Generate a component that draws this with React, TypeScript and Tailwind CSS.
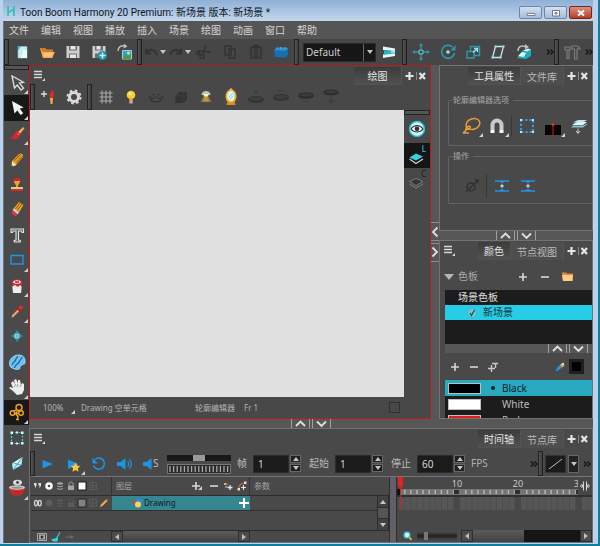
import type { ReactNode } from 'react'
import clsx from 'clsx'

const INK = '#d6d6d6'
const DIM = '#333333'
const TEAL = '#2b9aab'
const CYAN = '#35cfe6'
const BLUE = '#1f93e6'

// all drawings share a 20x20 box
const ICONS: Record<string, ReactNode> = {
  newScene: (
    <>
      <path d="M6 4.500h9v11.500H6z" fill="#c9eef2" stroke="#7fc7d2" strokeWidth=".6" />
      <path d="M6 4.500h3L6 8.500z" fill="#35b6cc" />
      <path d="M11 8h4v8H9z" fill="#e9fbfc" />
    </>
  ),
  openScene: (
    <>
      <path d="M3 6h5l2 1.500h6V16H6z" fill="#d07c2a" />
      <path d="M3 6l3 4h12l-3 6H6z" fill="#f4ab55" />
      <path d="M7 11h9l-2 3.500H7z" fill="#ffc67d" />
    </>
  ),
  save: (
    <>
      <path d="M3.500 4h13v12h-13z" fill="#cfcfcf" />
      <path d="M6 4h8v4.500H6zM6 11.500h8V16H6z" fill="#6c6c6c" />
      <path d="M7.500 4h5v3.500h-5zM7 12.500h6V16H7z" fill="#e6e6e6" />
    </>
  ),
  saveAs: (
    <>
      <path d="M3.500 4h13v12h-13z" fill="#cfcfcf" />
      <path d="M6 4h8v4.500H6zM6 11.500h6V16H6z" fill="#6c6c6c" />
      <path d="M7.500 4h4v3.500h-4z" fill="#e6e6e6" />
      <circle cx="13.500" cy="13.500" r="4.500" fill="#1497b5" />
      <path d="M13.500 10.500v6M10.500 13.500h6" stroke="#d8f6ff" strokeWidth="1.500" />
    </>
  ),
  importImage: (
    <>
      <path d="M3 9c0-4 3-6 7-5" stroke="#bdbdbd" strokeWidth="1.500" />
      <path d="M9 1.500l3.500 3-4 2z" fill="#bdbdbd" />
      <path d="M7.500 8.500h9v8.500h-9z" fill="#2aa2dc" stroke="#bfe6f4" strokeWidth=".8" />
      <path d="M8 17v-2l3-3 2 2 3-1v4z" fill="#4d9a3b" />
      <circle cx="13.500" cy="11" r="1.500" fill="#ffd94a" />
    </>
  ),
  undo: <path d="M5 11c2-4 9-5 11 2M5 6.500V11.500h5" stroke={DIM} strokeWidth="2" />,
  redo: <path d="M15 11c-2-4-9-5-11 2M15 6.500v5h-5" stroke={DIM} strokeWidth="2" />,
  cut: (
    <g stroke={DIM} strokeWidth="1.500">
      <path d="M12 3L9 12M4 9l13 1" />
      <circle cx="8" cy="14.500" r="2" />
      <circle cx="4" cy="11" r="1.600" />
    </g>
  ),
  copy: (
    <g stroke={DIM} strokeWidth="1.400">
      <path d="M5 4h6v9H5zM9 7h6v9H9z" />
    </g>
  ),
  paste: (
    <g stroke={DIM} strokeWidth="1.500">
      <path d="M5 5h10v11H5zM8 3.500h4v2.500H8zM7.500 9h5M7.500 11.500h5M7.500 14h5" />
    </g>
  ),
  brick: (
    <>
      <path d="M3 8l4-2.500 10 .5v7l-3 2.500L4 15z" fill="#1670b0" />
      <path d="M3 8l4-2.500 10 .5-3 3z" fill="#2d8ecb" />
      <path d="M6 5.500v2M10 5v2.500M14 5v2.500" stroke="#4aa8de" strokeWidth="1.500" />
    </>
  ),
  workspace: (
    <>
      <path d="M4 4.500l12 2v2.500L4 8zM4 16l12-2v-2.500L4 12.500z" fill="#e2fbff" />
      <path d="M5 8.500l7 .5v3l-7 .5z" fill="#27b4cd" />
      <path d="M12 9h4v2.500h-4z" fill="#8fe0ea" />
    </>
  ),
  translate: (
    <g stroke={TEAL} strokeWidth="1.300">
      <circle cx="10" cy="10" r="2.200" stroke="#63b7c4" />
      <path d="M10 7V3M10 13v4M7 10H3M13 10h4" />
      <path d="M10 1l2 3H8zM10 19l2-3H8zM1 10l3-2v4zM19 10l-3-2v4z" fill={TEAL} stroke="none" />
    </g>
  ),
  rotate: (
    <>
      <path d="M14.500 5a6.500 6.500 0 1 0 2 6" stroke={TEAL} strokeWidth="1.600" />
      <path d="M17.500 3v5.500h-5z" fill={TEAL} />
      <circle cx="10" cy="10" r="1.800" fill="#9de4ee" />
    </>
  ),
  scale: (
    <g stroke={TEAL} strokeWidth="1.400">
      <path d="M7.500 9V4.500h9v9h-5M4 9.500h7V16H4z" />
      <path d="M10 10.500l4-3.500M11 6.500h3.500V10" stroke="#9de4ee" />
    </g>
  ),
  skew: (
    <g stroke="#c5e9ee" strokeWidth="1.300">
      <path d="M7.500 4.500h8l-3 11h-8z" />
      <path d="M6.500 3.500h2v2h-2zM14.500 3.500h2v2h-2zM11.500 14.500h2v2h-2zM3.500 14.500h2v2h-2z" fill="#8fdce6" stroke="none" />
    </g>
  ),
  maintain: (
    <>
      <path d="M4 9c0-5 4-6 8-4" stroke="#bfbfbf" strokeWidth="1.500" />
      <path d="M11 2l4 3-4 2.500z" fill="#bfbfbf" />
      <path d="M9 8.500l5-2 3 1v6.500l-5 3-9-1 3-4z" fill="#1fa9bf" />
      <path d="M9 8.500l5-2 3 1-4 2zM4 14l4-4 4 1-2 4z" fill="#d9fbff" />
    </>
  ),
  hammers: (
    <path d="M3 5h5v3H3zM5 8v8.500h2V8M10 4h6l2 3h-3v10h-2.500V7H10z" stroke="#7c7c7c" strokeWidth="1.200" />
  ),
  select: (
    <path d="M5 3l2.500 12 2.700-3 3.800 5 2.500-1.800-4-5 4-1z" stroke="#e0e0e0" strokeWidth="1.300" />
  ),
  arrowFill: <path d="M5 3l2.500 12.500 2.700-3 3.500 4.500 2.500-1.800-3.500-4.700 4-1z" fill="#f4f4f4" />,
  brush: (
    <>
      <path d="M11 9l5-5 1.500 1.500-4.500 5.500z" fill="#f4a74c" />
      <path d="M10 8l4 3.500c-2 5-7 5.500-11 4 4-1 3-5 7-7.500z" fill="#d9262c" />
      <path d="M10.500 10.500l1.500 1.500" stroke="#ff8a70" />
    </>
  ),
  pencil: (
    <>
      <path d="M5 12l7-7c2-1.500 5 .5 4 3l-7 8-4 1.500z" fill="#e9971f" />
      <path d="M5 12l4.500 4-5 2z" fill="#f5e2bb" />
      <path d="M7.500 11.500l6-6M9.500 13.500L15.500 7" stroke="#8c5208" strokeWidth=".9" />
      <path d="M4.500 16l.3 2 1.700-.6z" fill="#333" />
    </>
  ),
  stamp: (
    <>
      <path d="M7 4h6v3H7z" fill="#d92027" />
      <path d="M6.500 7h7L11 11.500v2H9v-2z" fill="#f0a32b" />
      <path d="M4 13h12v2.300H4z" fill="#f2c188" />
      <path d="M4 15.300h12V17H4z" fill="#cf2b22" />
    </>
  ),
  eraser: (
    <>
      <path d="M7 9l5-6 4.500 3-4.500 7.500z" fill="#f0a427" />
      <path d="M8.500 10l5-6.500M10.500 11.500l4.500-7" stroke="#8a550e" />
      <path d="M7 9l5 4.500-1.500 2L5.500 11z" fill="#cfcfcf" />
      <path d="M5.500 11l5 4.500-2 2-4-3z" fill="#e23245" />
    </>
  ),
  text: (
    <path d="M4 4h12.500v3.500h-1.500L14.500 6h-3v9l1.800.5v1.500H7.200v-1.500L9 15V6H6l-.5 1.500H4z" fill="#5b5b5b" stroke="#e3e3e3" strokeWidth="1.100" />
  ),
  rect: <path d="M4 5.500h12v8.500H4z" stroke={BLUE} strokeWidth="1.400" />,
  paint: (
    <>
      <path d="M5 8h10l-1 9H6z" fill="#ededed" />
      <path d="M4.500 6c2-4 9-4 11 0l-.5 5-2-2-2 2-3-2-3 1.500z" fill="#d3262c" />
      <ellipse cx="10" cy="6" rx="3.800" ry="1.800" fill="#f5f5f5" />
      <path d="M8 6h4" stroke="#b31a22" strokeWidth="1.500" />
    </>
  ),
  dropper: (
    <>
      <path d="M4.500 16.500l.8-2.500 5.500-5.500 1.500 1.500-6 6z" fill="#f2a568" />
      <path d="M10 8l4-4 2.500 2.500-4 4.200z" fill="#dc2c2a" />
      <path d="M10 7l3.500 3.500" stroke="#a81414" strokeWidth="1.300" />
    </>
  ),
  pivot: (
    <>
      <path d="M10 4.500v11M4.500 10h11" stroke={TEAL} strokeWidth="1.600" />
      <circle cx="10" cy="10" r="3" fill="#e6fbff" stroke={TEAL} strokeWidth="1.300" />
      <path d="M10 8v4M8 10h4" stroke={TEAL} />
    </>
  ),
  morph: (
    <>
      <path d="M3.500 15C0 9 6 2.500 12 3c6 0 7 6 5.500 9-3 1-4 1-5 5-3 1-6 0-9-2z" fill="#6fc0f2" stroke="#a9dcfb" strokeWidth=".8" />
      <path d="M5 13c1-4 3-2 4-6l2-3M7.500 16c1-5 4-3 5-7l3-4" stroke="#1b5f9d" strokeWidth="1.200" />
    </>
  ),
  hand: (
    <>
      <path d="M4 6l2-2 2 3-1-4 2-1 2 4 0-3 2 0 1 5 1-2 2 1 0 6-2 4-5 1-4-4-4-3 1-1 3 1z" fill="#ededed" />
      <path d="M7 10l2-3M10 10l1-3M13 10l1-2" stroke="#8a8a8a" strokeWidth=".8" />
    </>
  ),
  contour: (
    <g stroke="#f0a51e" strokeWidth="1.400">
      <circle cx="12" cy="5.500" r="3" />
      <circle cx="5.500" cy="11" r="2.300" />
      <circle cx="14" cy="11" r="2.300" />
      <path d="M9.500 7.500L7 9M11 8.500c-2 2-3 3-1 5 2 1 1 2 0 4.500M8 11.500h3.500M9 17.500h3" />
    </g>
  ),
  marquee: (
    <>
      <path d="M4.500 4.500h11v11h-11z" stroke={CYAN} strokeWidth="1.200" strokeDasharray="2 1.500" />
      <path d="M3.500 3.500h2.500v2.500H3.500zM14 3.500h2.500v2.500H14zM3.500 14h2.500v2.500H3.500zM14 14h2.500v2.500H14zM9 3.500h2v2H9zM9 14.500h2v2H9z" fill="#d8f8fc" />
    </>
  ),
  kite: (
    <>
      <path d="M15.500 4l-1 8L6 17l-1-6.500z" fill="#b8eff5" />
      <path d="M15.500 4L6 17M6 10l8 2" stroke="#2a9fb3" strokeWidth=".9" />
      <path d="M15 4.500L9.500 10l-4 .5z" fill="#e8fcff" />
    </>
  ),
  bowl: (
    <>
      <path d="M2 9.500c.5 4 2.500 6.500 4.500 8h7c2-1.500 4-4 4.500-8z" fill="#d03030" />
      <path d="M4 14h12M5.500 16.300h9" stroke="#a51f1f" strokeWidth=".8" />
      <ellipse cx="10" cy="9.500" rx="8" ry="2.200" fill="#d6d6d6" />
      <ellipse cx="10" cy="9.600" rx="6" ry="1.200" fill="#8f8f8f" />
      <ellipse cx="10.500" cy="4.500" rx="4.500" ry="2.800" fill="#dcdcdc" />
      <circle cx="10.500" cy="4.500" r="1.400" fill="#444" />
    </>
  ),
  addDrawing: (
    <>
      <path d="M6 4v6M3 7h6" stroke="#dcdcdc" strokeWidth="1.400" />
      <path d="M12 11c-1-3 0-6 3-8 1 3 1 6 0 8z" fill="#de2b24" />
      <path d="M12 11h3l-.5 6h-2z" fill="#f3a848" />
    </>
  ),
  gear: (
    <>
      <circle cx="10" cy="10" r="4.500" stroke="#dadada" strokeWidth="3" />
      <circle cx="10" cy="10" r="6.500" stroke="#dadada" strokeWidth="2" strokeDasharray="2.600 2.500" />
    </>
  ),
  grid: <path d="M6 3.500v13M10 3.500v13M14 3.500v13M3.500 6h13M3.500 10h13M3.500 14h13" stroke="#a9a9a9" strokeWidth="1.100" />,
  bulb: (
    <>
      <circle cx="10" cy="8" r="4.300" fill="#fbcf30" />
      <path d="M8 11h4l-.5 3h-3z" fill="#f2a81d" />
      <path d="M8.300 14h3.400v2.500H8.300z" fill="#b7b7b7" />
      <circle cx="9" cy="6.800" r="1.500" fill="#fff2a8" />
    </>
  ),
  onion: (
    <g stroke={DIM} strokeWidth="1.200">
      <path d="M3 9c1 2 3 3 5 2M17 9c-1 2-3 3-5 2M4 12c2 4 10 4 12 0M7 7l1 1M13 7l-1 1M9 10h2" />
    </g>
  ),
  cube: (
    <>
      <path d="M4.500 9l3.500-4h8v7l-3 4H4.500z" fill="#343434" />
      <path d="M4.500 9H13M13 9v7M13 9l3-4" stroke="#3d3d3d" />
    </>
  ),
  lightTable: (
    <>
      <path d="M8 8.500h4l3.500 6.500h-11z" fill="#8e7430" />
      <path d="M8.500 8.500h3l1.500 6H7z" fill="#b8983f" />
      <path d="M5.500 8c0-5.500 9-5.500 9 0z" fill="#c7c3ba" />
      <ellipse cx="10" cy="8.300" rx="2.500" ry="1.200" fill="#fff4be" />
    </>
  ),
  mirror: (
    <>
      <ellipse cx="10" cy="9.500" rx="5.500" ry="7" fill="#f0ab2a" />
      <ellipse cx="10" cy="9" rx="3.800" ry="5.300" fill="#d5f5fa" />
      <path d="M8 10l4-4M8.500 12.500l4-4" stroke="#8ed3e0" />
      <path d="M6 15.500h8l.5 2.500h-9z" fill="#dc8d1c" />
      <path d="M8 3l2-2 2 2z" fill="#f6c04f" />
    </>
  ),
  discPlus: (
    <>
      <path d="M2.500 12v2c2 2.500 13 2.500 15 0v-2z" fill="#343434" />
      <ellipse cx="10" cy="12" rx="7.500" ry="2.300" fill="#3d3d3d" stroke="#333" />
      <path d="M10 2v5M7.500 4.500h5" stroke="#3a3a3a" />
    </>
  ),
  discMinus: (
    <>
      <path d="M2.500 10v2c2 2.500 13 2.500 15 0v-2z" fill="#343434" />
      <ellipse cx="10" cy="10" rx="7.500" ry="2.300" fill="#3d3d3d" stroke="#333" />
      <path d="M6.500 4h7" stroke="#3a3a3a" />
    </>
  ),
  disc: (
    <>
      <path d="M2.500 8v2c2 2.500 13 2.500 15 0V8z" fill="#303030" />
      <ellipse cx="10" cy="8" rx="7.500" ry="2" fill="#3b3b3b" stroke="#2c2c2c" />
      <path d="M7 14.500h6" stroke="#3c3c3c" />
    </>
  ),
  discStem: (
    <>
      <path d="M2.500 5v1.500c2 2.500 13 2.500 15 0V5z" fill="#303030" />
      <ellipse cx="10" cy="5" rx="7.500" ry="2" fill="#3b3b3b" stroke="#2c2c2c" />
      <path d="M10 9v8M7 14h6" stroke="#3a3a3a" />
    </>
  ),
  eye: (
    <>
      <circle cx="10" cy="10" r="7.500" fill="#d7fafd" stroke="#27bfd2" strokeWidth="1.500" />
      <path d="M4 10c3-4.500 9-4.500 12 0-3 4-9 4-12 0z" fill="#f9ffff" stroke="#333" strokeWidth="1.200" />
      <circle cx="10" cy="9.800" r="2.400" fill="#333" />
    </>
  ),
  lineArt: (
    <>
      <path d="M2.500 13L9 17.500l7-4.500" stroke="#d0d0d0" strokeWidth="1.300" />
      <path d="M2.500 11.500L9 7.500l7 3-7 4z" fill={CYAN} />
    </>
  ),
  colorArt: (
    <>
      <path d="M2.500 13L9 17l7-4" stroke="#808080" />
      <path d="M2.500 10.500L9 7.500l7 3-7 4z" stroke="#7a7a7a" fill="#343434" />
    </>
  ),
  lasso: (
    <g stroke="#e69b38" strokeWidth="1.500">
      <ellipse cx="11" cy="8" rx="7" ry="5.300" transform="rotate(-18 11 8)" />
      <path d="M5 10c-2 3 1 5 3 2s-4-2-4 1c0 2-1 3-3 4l6 0" />
    </g>
  ),
  magnet: (
    <>
      <path d="M5.500 14V9a4.500 4.500 0 0 1 9 0v5" stroke="#cacaca" strokeWidth="4" />
      <path d="M3.500 14h4v3h-4zM12.500 14h4v3h-4z" fill="#fbfbfb" />
    </>
  ),
  selBox: (
    <>
      <path d="M4 4h12v12H4z" stroke="#2f9de0" strokeWidth="2.200" strokeDasharray="2.200 2" />
      <path d="M3 3h2v2H3zM15 3h2v2h-2zM3 15h2v2H3zM15 15h2v2h-2z" fill="#bde6fb" />
    </>
  ),
  redLine: (
    <>
      <path d="M2 9h16v10H2z" fill="#050505" />
      <path d="M10 8v11" stroke="#a3141a" strokeWidth="1.400" />
      <circle cx="10" cy="8.500" r="1.500" fill="#ee2a2e" />
    </>
  ),
  layersDown: (
    <>
      <path d="M3 9l5-3h10l-4 3z" fill="#e5f7fa" />
      <path d="M2 11.500l2-2h11l3-2v1l-4 3z" fill="#84c4cf" />
      <path d="M4 6.500l5-2.500h9l-4 2.500z" fill="#bfe6ec" />
      <path d="M9 12.500V17M7 15l2 2.500 2-2.500" stroke="#d0d0d0" />
    </>
  ),
  smooth: (
    <g stroke="#313131" strokeWidth="1.500">
      <circle cx="9" cy="11" r="4" />
      <path d="M4 16L16 4M12.500 4H16v3.500" />
    </g>
  ),
  flatten: (
    <>
      <path d="M3 5h14M3 15h14" stroke={BLUE} strokeWidth="1.600" />
      <path d="M7 5h6l-3 2.500zM7 15h6l-3-2.500z" fill={BLUE} />
      <path d="M10 8.300v3.400M8.300 10h3.400" stroke="#d0d0d0" strokeWidth="1.300" />
    </>
  ),
  folder: (
    <>
      <path d="M5 5.500h4l1 1h6V14H6z" fill="#dd8c38" />
      <path d="M5 8h11l-1 6H6z" fill="#ffcb88" />
    </>
  ),
  colorPencil: (
    <>
      <path d="M1 19l4-9 6-5 5 4-8 7z" fill="#2195dc" />
      <path d="M10 6l4-4 5 5-4 4z" fill="#f0a050" />
      <circle cx="16" cy="4" r="2.500" fill="#f0d090" />
    </>
  ),
  play: <path d="M4.500 6l10.500 4-10.500 4.500z" fill={BLUE} />,
  playStar: (
    <>
      <path d="M4 5.500l10.500 4.500L4 15z" fill={BLUE} />
      <path d="M11.500 8.500l1.500 3 3.300.5-2.400 2.300.6 3.400-3-1.600-3 1.600.6-3.400L6.700 12l3.300-.5z" fill="#ffc43d" />
    </>
  ),
  loop: (
    <>
      <path d="M6 5.500a5.600 5.600 0 1 1-1.500 6" stroke={BLUE} strokeWidth="1.600" />
      <path d="M3.500 4v5.500H9z" fill={BLUE} />
    </>
  ),
  sound: (
    <>
      <path d="M3 8h3.500l5-4v12l-5-4H3z" fill={BLUE} />
      <path d="M13.500 7c1.500 2 1.500 4 0 6M15.500 5.500c2.500 3 2.500 6 0 9" stroke={BLUE} strokeWidth="1.200" />
    </>
  ),
  soundScrub: <path d="M2 8h3.500l5-4v12l-5-4H2z" fill={BLUE} />,
  chat: <path d="M2 4h5v5L4 15V9H2zM11 4h5v5l-3 6V9h-2z" fill="#dedede" />,
  pair: (
    <g stroke="#d8d8d8" strokeWidth="2.500">
      <ellipse cx="6" cy="10" rx="3" ry="5.500" />
      <ellipse cx="13.500" cy="10" rx="3" ry="5.500" />
    </g>
  ),
  ring: <circle cx="10" cy="10" r="5" stroke="#fff" strokeWidth="5" />,
  ringDim: <circle cx="10" cy="10" r="7" fill="#5c5c5c" />,
  stack: <path d="M4 4c3-2 9-2 12 0v2c-3 2-9 2-12 0zM4 9c3 2 9 2 12 0v2c-3 2-9 2-12 0zM4 14c3 2 9 2 12 0v2c-3 2-9 2-12 0z" fill="currentColor" />,
  lock: (
    <>
      <path d="M4 9h12v9H4z" fill="currentColor" />
      <path d="M6 9V6c0-5 8-5 8 0v3" stroke="currentColor" strokeWidth="2" />
    </>
  ),
  onionDim: <path d="M3 3h14v14H3zM10 3v14M6 7l4 3-4 3M14 7v6" stroke="#626262" strokeWidth="1.500" />,
  whiteBox: <path d="M2 2h16v16H2z" fill="#fff" stroke="#1b1b1b" strokeWidth="2" />,
  greyBox: <path d="M2 2h16v16H2z" fill="#818181" stroke="#242424" strokeWidth="2" />,
  yellowPencil: (
    <>
      <path d="M2 18l2-5L14 3l3 3L7 16z" fill="#f0b43b" />
      <path d="M14 3l2-2 3 3-2 2z" fill="#e0473c" />
    </>
  ),
  drawingLayer: (
    <>
      <path d="M1 10L6 3l5 8z" fill="#e83c2f" />
      <path d="M9 1h10v10H9z" fill="#278ce0" />
      <circle cx="12" cy="13" r="6" fill="#ffd152" />
    </>
  ),
  addPeg: (
    <>
      <path d="M2 4h5v4H2z" fill="#eab73a" />
      <path d="M7 4l4 2-3 4z" fill="#d7524a" />
      <path d="M4 10h5v4H4z" fill="#3aa0dd" />
      <path d="M14 8v10M9 13h10" stroke="#e5e5e5" strokeWidth="2.600" />
    </>
  ),
  addCurve: (
    <>
      <path d="M3 17C3 8 8 4 16 4" stroke="#e0703a" strokeWidth="2.200" />
      <path d="M1 14h5v5H1zM14 1h5v5h-5z" fill="#ddd" />
      <path d="M13 8v10M8 13h10" stroke="#e5e5e5" strokeWidth="2.200" />
    </>
  ),
  thumb: (
    <>
      <path d="M1 3h18v14H1z" stroke="#c8c8c8" strokeWidth="1.500" />
      <path d="M4 5h12v10H4z" fill="#adadad" />
      <circle cx="10" cy="10" r="3" fill="#333" />
    </>
  ),
  broom: <path d="M19 0l-6 12c2 2 1 6-1 7H4l-4-4 10-3 7-12z" fill={CYAN} />,
  arrowDim: <path d="M1 9h10V6l7 4-7 4v-3H1z" fill="#6d6d6d" />,
  zoom: (
    <>
      <circle cx="8" cy="8" r="5.500" fill="#effcff" stroke={CYAN} strokeWidth="3" />
      <path d="M12 12l5 6" stroke="#e89b38" strokeWidth="4" />
    </>
  ),
  fit: (
    <path d="M7 1v18M13 1v18M0 10h5M15 10h5M3 6l3 4-3 4M17 6l-3 4 3 4" stroke={INK} strokeWidth="2" />
  ),
}

function Icon({ name, size = 'md' }: { name: string; size?: 'sm' | 'md' }) {
  return (
    <svg viewBox="0 0 20 20" fill="none" aria-hidden="true" className={clsx('shrink-0', size === 'sm' ? 'h-[10px] w-[10px]' : 'h-5 w-5')}>
      {ICONS[name]}
    </svg>
  )
}

function Corner() {
  return (
    <svg viewBox="0 0 4 4" aria-hidden="true" className="absolute right-px bottom-px h-1 w-1">
      <path d="M4 0v4H0z" fill="#d0d0d0" />
    </svg>
  )
}

type ToolButtonProps = { icon: string; label: string; menu?: boolean; size?: 'sm' | 'md'; className?: string }

function ToolButton({ icon, label, menu, size, className }: ToolButtonProps) {
  return (
    <button type="button" aria-label={label} className={clsx('relative flex shrink-0 items-center justify-center', className)}>
      <Icon name={icon} size={size} />
      {menu && <Corner />}
    </button>
  )
}

function Handle() {
  return <div className="w-[5px] shrink-0 self-stretch border border-[#222] bg-linear-to-r from-[#555] to-[#3c3c3c]" />
}

function More() {
  return (
    <button type="button" aria-label="更多" className="w-2 shrink-0">
      <svg viewBox="0 0 8 8" fill="none" className="h-2 w-2">
        <path d="M1 1.500L3.500 4 1 6.500M4.500 1.500L7 4 4.500 6.500" stroke="#111" strokeWidth="1.300" />
      </svg>
    </button>
  )
}

function Caret({ className }: { className?: string }) {
  return (
    <svg viewBox="0 0 6 4" aria-hidden="true" className={clsx('h-1 w-1.5 shrink-0', className)}>
      <path d="M0 0h6L3 4z" fill="#c6c6c6" />
    </svg>
  )
}

function PanelMenu() {
  return (
    <button type="button" aria-label="面板菜单" className="mt-1 ml-1 h-3 w-3 self-start">
      <svg viewBox="0 0 12 12" fill="none" className="h-3 w-3">
        <path d="M0 1.500h8M0 4.500h8M0 7.500h8" stroke="#d8d8d8" strokeWidth="1.300" />
        <path d="M11 8v3H8z" fill="#d8d8d8" />
      </svg>
    </button>
  )
}

function PanelHeader({ tabs, menu = true }: { tabs: string[]; menu?: boolean }) {
  return (
    <header className="flex h-[22px] shrink-0 items-start">
      {menu && <PanelMenu />}
      <div role="tablist" className="ml-auto flex pt-px">
        {tabs.map((tab, i) => (
          <button
            key={tab}
            type="button"
            role="tab"
            aria-selected={i === 0}
            className={clsx(
              'h-[18px] border-r border-[#555] text-[10px] leading-4',
              tabs.length === 1 ? 'w-12' : 'px-1.5',
              i === 0 ? 'bg-linear-to-b from-[#3c3c3c] to-[#525252] text-[#e4e4e4]' : 'bg-[#4e4e4e] pt-0.5 text-[#b9b9b9]',
            )}
          >
            {tab}
          </button>
        ))}
      </div>
      <div className="flex h-5 w-7 items-center justify-center">
        <svg viewBox="0 0 22 10" fill="none" className="h-[10px] w-[22px]" role="img" aria-label="添加 关闭">
          <path d="M4.500 1v8M.5 5h8" stroke="#e4e4e4" strokeWidth="2.200" />
          <path d="M11.500 1v8" stroke="#888" />
          <path d="M14.500 2l5.500 6M20 2l-5.500 6" stroke="#e4e4e4" strokeWidth="2.200" />
        </svg>
      </div>
    </header>
  )
}

function Splitter({ className, vertical }: { className?: string; vertical?: boolean }) {
  return (
    <div className={clsx('flex shrink-0 items-center bg-[#575757]', vertical ? 'w-2' : 'h-[9px]', className)}>
      {vertical ? (
        <svg viewBox="0 0 8 40" fill="none" className="h-10 w-2">
          <path d="M0 .5h8M0 18.500h8M0 21.500h8M0 39.500h8" stroke="#8c8c8c" />
          <path d="M6.500 5.500L2 10l4.500 4.500M1.500 25.500L6 30l-4.500 4.500" stroke="#e0e0e0" strokeWidth="1.800" />
        </svg>
      ) : (
        <svg viewBox="0 0 40 9" fill="none" className="h-[9px] w-10">
          <path d="M.5 0v9M18.500 0v9M21.500 0v9M39.500 0v9" stroke="#a0a0a0" />
          <path d="M5 7l4.500-4.500L14 7M26 2.500L30.500 7 35 2.500" stroke="#e0e0e0" strokeWidth="1.800" />
        </svg>
      )}
    </div>
  )
}

function TitleBar() {
  return (
    <div className="flex h-[21px] shrink-0 items-center bg-linear-to-b from-[#8fb0d6] via-[#a8c3e2] to-[#c3d6eb] pl-[3px]">
      <svg viewBox="0 0 12 12" fill="none" className="h-[10px] w-[10px]" aria-hidden="true">
        <path d="M2.500 0v12M9.500 0v12M2.500 7.500c4 0 3-3 7-3" stroke="#2dbfae" strokeWidth="2" />
      </svg>
      <h1 className="ml-1 pt-1 font-[Roboto,'Noto_Sans_CJK_SC',sans-serif] text-[10px] whitespace-nowrap text-[#10151c]">
        Toon Boom Harmony 20 Premium: 新场景 版本: 新场景 *
      </h1>
      <div className="mt-1 mr-px ml-auto flex gap-0.5">
        {['最小化', '最大化', '关闭'].map((label, i) => (
          <button
            key={label}
            type="button"
            aria-label={label}
            className={clsx(
              'flex h-[13px] w-[23px] items-center justify-center rounded-xs border',
              i === 2 ? 'border-[#6b2b24] bg-linear-to-b from-[#dc8f80] to-[#b93a22]' : 'border-[#6d86a5] bg-linear-to-b from-[#d2e0ef] to-[#a5bdd9]',
            )}
          >
            <svg viewBox="0 0 10 8" fill="none" className="h-2 w-[10px]">
              {i === 0 && <path d="M1 4.500h8v2H1z" fill="#fff" stroke="#4b5c72" strokeWidth=".7" />}
              {i === 1 && <path d="M1.500 1.500h7v5.500h-7zM4 3.500h2v1.500H4z" fill="#fff" stroke="#4b5c72" strokeWidth=".8" />}
              {i === 2 && <path d="M2 1.500l6 5M8 1.500l-6 5" stroke="#fff" strokeWidth="2" />}
            </svg>
          </button>
        ))}
      </div>
    </div>
  )
}

const MENUS = ['文件', '编辑', '视图', '播放', '插入', '场景', '绘图', '动画', '窗口', '帮助']

function MainToolbar() {
  return (
    <div className="flex h-[26px] shrink-0 items-center overflow-hidden bg-[#464646]">
      <Handle />
      <ToolButton icon="newScene" label="新建" className="w-[25px]" />
      <ToolButton icon="openScene" label="打开" className="w-[26px]" />
      <ToolButton icon="save" label="保存" className="w-[26px]" />
      <ToolButton icon="saveAs" label="另存为" className="w-[26px]" />
      <ToolButton icon="importImage" label="导入图像" className="w-[25px]" />
      <Handle />
      <ToolButton icon="undo" label="撤销" className="w-[18px]" />
      <Caret />
      <ToolButton icon="redo" label="重做" className="w-[19px]" />
      <Caret />
      <ToolButton icon="cut" label="剪切" className="w-[26px]" />
      <ToolButton icon="copy" label="复制" className="w-[26px]" />
      <ToolButton icon="paste" label="粘贴" className="w-[25px]" />
      <ToolButton icon="brick" label="渲染" className="w-[26px]" />
      <Handle />
      <label className="relative ml-1 flex h-[19px] w-[73px] shrink-0 items-center border border-[#2a2a2a] bg-[#161616]">
        <select aria-label="工作区" className="h-full w-full appearance-none bg-transparent pl-0.5 text-[10px] leading-4 text-[#cfcfcf]">
          <option>Default</option>
        </select>
        <span className="pointer-events-none absolute inset-y-0 right-0 flex w-3 items-center justify-center border-l border-[#666]">
          <Caret />
        </span>
      </label>
      <ToolButton icon="workspace" label="工作区管理" className="w-[26px]" />
      <Handle />
      <ToolButton icon="translate" label="平移" className="w-[28px]" />
      <ToolButton icon="rotate" label="旋转" className="w-[25px]" />
      <ToolButton icon="scale" label="缩放" className="w-[25px]" />
      <ToolButton icon="skew" label="倾斜" className="w-[26px]" />
      <ToolButton icon="maintain" label="保持大小" className="w-[25px]" />
      <div className="ml-auto flex items-center self-stretch">
        <More />
        <Handle />
        <ToolButton icon="hammers" label="脚本" className="w-[26px]" />
        <More />
      </div>
    </div>
  )
}

const TOOLS = [
  { icon: 'select', label: '选择', menu: true },
  { icon: 'arrowFill', label: '变换', menu: true, active: true },
  { icon: 'brush', label: '画笔', menu: true },
  { icon: 'pencil', label: '铅笔' },
  { icon: 'stamp', label: '图章' },
  { icon: 'eraser', label: '橡皮擦' },
  { icon: 'text', label: '文本' },
  { icon: 'rect', label: '矩形', menu: true },
  { icon: 'paint', label: '油漆桶', menu: true },
  { icon: 'dropper', label: '吸管', menu: true },
  { icon: 'pivot', label: '轴心' },
  { icon: 'morph', label: '变形' },
  { icon: 'hand', label: '抓手', menu: true },
  { icon: 'contour', label: '轮廓编辑器', menu: true, active: true },
  { icon: 'marquee', label: '选框' },
  { icon: 'kite', label: '透视' },
  { icon: 'bowl', label: '装配', menu: true },
]

function ToolStrip() {
  return (
    <nav className="w-[25px] shrink-0 bg-[#4a4a4a]">
      <div className="h-[5px] border border-[#222] bg-[#555]" />
      <div className="flex h-[431px] flex-col">
        {TOOLS.map((tool) => (
          <ToolButton key={tool.label} icon={tool.icon} label={tool.label} menu={tool.menu} className={clsx('w-full flex-1', tool.active && 'bg-[#181818]')} />
        ))}
      </div>
    </nav>
  )
}

const VIEW_TOOLS = [
  ['grid', '网格'],
  ['bulb', '灯光桌'],
  ['onion', '洋葱皮'],
  ['cube', '立方体'],
  ['lightTable', '台灯'],
  ['mirror', '镜像'],
  ['discPlus', '添加键'],
  ['discMinus', '删除键'],
  ['disc', '上一键'],
  ['discStem', '下一键'],
]

function DrawingView() {
  return (
    <section className="flex min-w-0 flex-1 flex-col border border-[#bd1b1b] bg-[#484848]">
      <div className="-mb-1 shrink-0">
        <PanelHeader tabs={['绘图']} />
      </div>
      <div className="flex h-[26px] shrink-0 items-center overflow-hidden">
        <Handle />
        <ToolButton icon="addDrawing" label="添加绘图" className="w-[26px]" />
        <ToolButton icon="gear" label="设置" className="w-[26px]" />
        <Handle />
        <div className="ml-px flex">
          {VIEW_TOOLS.map(([icon, label]) => (
            <ToolButton key={label} icon={icon} label={label} className="w-[25px]" />
          ))}
        </div>
      </div>
      <div className="flex min-h-0 flex-1">
        <div className="flex-1 bg-[#e1e1e1]" />
        <div className="w-[26px] shrink-0">
          <div className="h-[5px] border border-[#222] bg-[#555]" />
          <ToolButton icon="eye" label="预览" className="h-7 w-full" />
          <button type="button" aria-label="线条图层" className="relative flex h-[25px] w-full items-center justify-center bg-[#151515]">
            <Icon name="lineArt" />
            <span className="absolute top-0.5 right-1 text-[8px] leading-2 text-[#35cfe6]">L</span>
          </button>
          <button type="button" aria-label="颜色图层" className="relative flex h-[25px] w-full items-center justify-center">
            <Icon name="colorArt" />
            <span className="absolute top-0.5 right-1 text-[8px] leading-2 text-[#1d1d1d]">C</span>
          </button>
        </div>
      </div>
      <footer className="flex h-[21px] shrink-0 items-center pl-[13px] text-[8px] whitespace-nowrap text-[#b4b4b4]">
        <span className="relative w-[38px]">
          100%
          <svg viewBox="0 0 4 4" className="absolute right-1.5 bottom-0 h-1 w-1">
            <path d="M4 0v4H0z" fill="#d0d0d0" />
          </svg>
        </span>
        <span className="w-[114px]">Drawing 空单元格</span>
        <span className="w-[49px]">轮廓编辑器</span>
        <span>Fr 1</span>
        <span className="mr-[30px] ml-auto h-[11px] w-[11px] border border-[#303030]" />
      </footer>
    </section>
  )
}

function ToolProperties() {
  return (
    <section className="flex h-[166px] shrink-0 flex-col border border-[#737373] bg-[#494949]">
      <PanelHeader tabs={['工具属性', '文件库']} menu={false} />
      <fieldset className="mt-1.5 ml-2 flex h-[52px] items-center rounded-l-xs border border-r-0 border-[#626262] pt-2 pl-2.5">
        <legend className="-ml-1.5 pr-1 text-[8px] leading-3 text-[#a9a9a9]">轮廓编辑器选项</legend>
        <ToolButton icon="lasso" label="套索" menu className="h-6 w-[25px]" />
        <ToolButton icon="magnet" label="吸附" menu className="h-6 w-[26px]" />
        <div className="mx-px h-5 w-px bg-[#383838]" />
        <ToolButton icon="selBox" label="选择框" className="h-6 w-[27px]" />
        <ToolButton icon="redLine" label="轮廓" menu className="h-6 w-[26px]" />
        <ToolButton icon="layersDown" label="应用到全部图层" className="h-6 w-[26px]" />
      </fieldset>
      <fieldset className="mt-1 ml-2 flex h-[54px] items-center rounded-l-xs border border-r-0 border-[#626262] pt-3 pl-2.5">
        <legend className="-ml-1.5 pr-1 text-[8px] leading-3 text-[#a9a9a9]">操作</legend>
        <ToolButton icon="smooth" label="平滑" className="w-[25px]" />
        <div className="mx-0.5 h-6 w-px bg-[#383838]" />
        <ToolButton icon="flatten" label="拼合" className="w-[26px]" />
        <ToolButton icon="flatten" label="合并" className="w-[26px]" />
      </fieldset>
    </section>
  )
}

function Glyph({ kind, label }: { kind: 'plus' | 'minus'; label: string }) {
  return (
    <button type="button" aria-label={label} className="flex h-[10px] w-[10px] shrink-0 items-center justify-center">
      <svg viewBox="0 0 10 10" className="h-2 w-2">
        <path d={kind === 'plus' ? 'M5 0v10M0 5h10' : 'M0 5h10'} stroke="#d8d8d8" strokeWidth="2" />
      </svg>
    </button>
  )
}

function ColorPanel() {
  const colors = [
    { name: 'Black', swatch: 'bg-black', active: true },
    { name: 'White', swatch: 'bg-white' },
    { name: 'Red', swatch: 'bg-[#e31b1b]' },
  ]
  return (
    <section className="flex min-h-0 flex-1 flex-col overflow-hidden border border-[#737373] bg-[#494949]">
      <PanelHeader tabs={['颜色', '节点视图']} />
      <div className="flex h-[27px] shrink-0 items-center pr-5 pl-1 text-[10px] text-[#a9a9a9]">
        <svg viewBox="0 0 10 6" className="mr-1 h-1.5 w-[10px]">
          <path d="M0 0h10L5 6z" fill="#b5b5b5" />
        </svg>
        色板
        <span className="ml-auto flex items-center gap-3">
          <Glyph kind="plus" label="添加色板" />
          <Glyph kind="minus" label="删除色板" />
          <ToolButton icon="folder" label="打开色板" className="w-[10px]" />
        </span>
      </div>
      <ul className="ml-[5px] h-[54px] shrink-0 bg-[#1c1c1c] text-[10px] leading-[15px]">
        <li className="h-[15px] pl-[13px] text-[#e0e0e0]">场景色板</li>
        <li className="flex h-[15px] items-center bg-[#27cde6] pl-[22px] text-[#12343a]">
          <svg viewBox="0 0 10 10" fill="none" className="mr-1.5 h-[10px] w-[10px]">
            <circle cx="5" cy="5" r="4.500" fill="#59d3e2" stroke="#87939a" strokeWidth=".8" />
            <path d="M3 5l1.500 2.500L7.500 2" stroke="#27414a" strokeWidth="1.200" />
          </svg>
          新场景
        </li>
      </ul>
      <Splitter className="ml-[5px] justify-end pr-1" />
      <div className="flex h-[27px] shrink-0 items-center gap-[9px] pr-2 pl-[10px]">
        <Glyph kind="plus" label="添加颜色" />
        <Glyph kind="minus" label="删除颜色" />
        <button type="button" aria-label="添加纹理">
          <svg viewBox="0 0 10 10" fill="none" className="h-[10px] w-[10px]">
            <path d="M3.500 3v7M0 6.500h7M4 1.500h6M7.500 1.500V6" stroke="#c9c9c9" strokeWidth="1.400" />
          </svg>
        </button>
        <span className="ml-auto flex items-center gap-1">
          <ToolButton icon="colorPencil" label="编辑颜色" size="sm" />
          <span className="h-[15px] w-[15px] border-[3px] border-[#202020] bg-black" />
        </span>
      </div>
      <ul className="ml-[5px] min-h-0 flex-1 overflow-hidden bg-[#1c1c1c] text-[10px]">
        {colors.map((c) => (
          <li key={c.name} className={clsx('flex h-4 items-center pl-[3px]', c.active ? 'bg-[#27a9bf] text-[#0e2226]' : 'text-[#bdbdbd]')}>
            <span className={clsx('h-[11px] w-[33px] border border-[#bfbfbf]', c.swatch)} />
            <span className={clsx('mr-[7px] ml-[10px] h-1 w-1 rounded-full', c.active && 'bg-[#071b1f]')} />
            {c.name}
          </li>
        ))}
      </ul>
    </section>
  )
}

function Spin({ label, value }: { label: string; value: string }) {
  return (
    <label className="mr-2 flex shrink-0 items-center text-[10px] text-[#bdbdbd]">
      {label}
      <input defaultValue={value} className="ml-1.5 h-[18px] w-9 border border-[#2b2b2b] bg-[#1b1b1b] pl-1 text-[10px] text-[#d5d5d5]" />
      <span className="ml-px flex flex-col gap-px">
        {['增加', '减少'].map((dir, i) => (
          <button key={dir} type="button" aria-label={dir} className="flex h-2 w-[11px] items-center justify-center border border-[#666] bg-[#202020]">
            <Caret className={clsx(i === 0 && 'rotate-180')} />
          </button>
        ))}
      </span>
    </label>
  )
}

function ScrollArrow({ left }: { left?: boolean }) {
  return (
    <button type="button" aria-label={left ? '向左滚动' : '向右滚动'} className="flex h-full w-3 shrink-0 items-center justify-center border border-[#2e2e2e] bg-[#4c4c4c]">
      <svg viewBox="0 0 4 6" className="h-1.5 w-1">
        <path d={left ? 'M4 0v6L0 3z' : 'M0 0v6l4-3z'} fill="#bdbdbd" />
      </svg>
    </button>
  )
}

const FRAME = 6.1

function Ruler() {
  const frames = Array.from({ length: 32 }, (_, i) => i + 1)
  return (
    <svg className="block h-[53px] w-full overflow-hidden bg-[#484848]" fill="none">
      <rect y="12" width="100%" height="6" fill="#747474" />
      <rect y="18" width="100%" height="2" fill="#303030" />
      {frames.map((f) => {
        const x = 2 + (f - 1) * FRAME
        const tenth = f % 10 === 0
        return (
          <g key={f}>
            {tenth ? <rect x={x} y="13" width="5" height="4" fill="#2d2d2d" /> : <rect x={x + 5} y="13" width="1.500" height="4" fill="#b4b4b4" />}
            {!tenth && <rect x={x} y="20" width="5.600" height="13" fill="#565656" />}
            {tenth && (
              <text x={x + 3} y="10" textAnchor="middle" fontSize="9" fill="#c8c8c8">
                {f}
              </text>
            )}
          </g>
        )
      })}
      <path d="M0 12h3v6H0z" fill="#111" />
      <path d="M1 0h5v9l-2.500 3L1 9z" fill="#e32222" />
      <path d="M3.500 10v23" stroke="#d42121" />
    </svg>
  )
}

function Timeline() {
  return (
    <section className="flex h-[115px] shrink-0 flex-col border border-[#707070] bg-[#494949]">
      <PanelHeader tabs={['时间轴', '节点库']} />
      <div className="flex h-[25px] shrink-0 items-center overflow-hidden">
        <Handle />
        <ToolButton icon="play" label="播放" className="w-[26px]" />
        <ToolButton icon="playStar" label="渲染并播放" menu className="h-6 w-[25px]" />
        <ToolButton icon="loop" label="循环" className="w-[25px]" />
        <ToolButton icon="sound" label="声音" className="w-[26px]" />
        <button type="button" aria-label="声音滚动" className="flex w-[26px] shrink-0 items-center pl-1 text-[10px] text-[#bdbdbd]">
          <Icon name="soundScrub" />
          <span className="-ml-2">S</span>
        </button>
        <svg viewBox="0 0 64 20" className="mr-1.5 ml-1 h-5 w-16 shrink-0" role="img" aria-label="滚轮">
          <path d="M0 1h64v6H0z" fill="#181818" />
          <path d="M26 1h12v6H26z" fill="#999" />
          <path d="M.5 10.500h63v9H.5z" fill="#2b2b2b" stroke="#777" />
          {Array.from({ length: 17 }, (_, i) => (
            <path key={i} d={`M${3 + i * 3.6} 12v6`} stroke="#a8a8a8" strokeWidth="1.300" />
          ))}
        </svg>
        <Spin label="帧" value="1" />
        <Spin label="起始" value="1" />
        <Spin label="停止" value="60" />
        <span className="-ml-0.5 text-[10px] text-[#b0b0b0]">FPS</span>
        <div className="ml-auto flex items-center self-stretch pr-px">
          <More />
          <Handle />
          <button type="button" aria-label="缓动" className="ml-0.5 h-[18px] w-[21px] border border-[#333] bg-[#1b1b1b]">
            <svg viewBox="0 0 20 16" className="h-4 w-5">
              <path d="M3 13L16 3" stroke="#bdbdbd" />
            </svg>
          </button>
          <button type="button" aria-label="缓动菜单" className="mr-1 ml-0.5 flex h-[18px] w-[11px] items-center justify-center border border-[#666] bg-[#222]">
            <Caret />
          </button>
          <More />
        </div>
      </div>
      <div className="ml-px flex min-h-0 flex-1 border-t border-[#77727c]">
        <div className="flex min-w-0 flex-1 flex-col text-[8px] text-[#a5a5a5]">
          <div className="flex h-[19px] shrink-0 items-center border-b border-[#2d2d2d]">
            <div className="flex w-[80px] shrink-0 items-center gap-px pl-0.5">
              <Icon name="chat" size="sm" />
              <Icon name="ring" size="sm" />
              <Icon name="stack" size="sm" />
              <Icon name="lock" size="sm" />
              <Icon name="whiteBox" size="sm" />
              <Icon name="onionDim" size="sm" />
            </div>
            <div className="flex w-[139px] shrink-0 items-center gap-1 self-stretch border-x border-[#333] pr-0.5 pl-1">
              <span className="mr-auto">图层</span>
              <span className="relative mr-0.5 pr-0.5">
                <Glyph kind="plus" label="添加图层" />
                <Corner />
              </span>
              <Glyph kind="minus" label="删除图层" />
              <Icon name="addPeg" size="sm" />
              <Icon name="addCurve" size="sm" />
            </div>
            <span className="pl-1">参数</span>
          </div>
          <div className="flex min-h-0 flex-1">
            <div className="flex-1">
              <div className="flex h-[15px] items-center border-b border-[#303030]">
                <div className="flex w-[81px] shrink-0 items-center gap-px pl-0.5 text-[#5b5b5b]">
                  <Icon name="pair" size="sm" />
                  <Icon name="ringDim" size="sm" />
                  <Icon name="stack" size="sm" />
                  <Icon name="lock" size="sm" />
                  <Icon name="greyBox" size="sm" />
                  <Icon name="onionDim" size="sm" />
                  <Icon name="yellowPencil" size="sm" />
                </div>
                <div className="flex h-full w-[138px] items-center gap-0.5 bg-[#358691] pr-px pl-5 text-[#101c1f]">
                  <Icon name="drawingLayer" size="sm" />
                  Drawing
                  <svg viewBox="0 0 10 10" className="ml-auto h-[10px] w-[10px]">
                    <path d="M5 0v10M0 5h10" stroke="#fff" strokeWidth="2" />
                  </svg>
                </div>
              </div>
            </div>
            <div className="flex w-3 shrink-0 flex-col border-x border-[#2d2d2d] bg-[#555]">
              <div className="flex h-3 items-center justify-center border-b border-[#2d2d2d] bg-[#424242]">
                <Caret className="w-1 rotate-180" />
              </div>
              <div className="flex-1" />
              <div className="flex h-3 items-center justify-center border-t border-[#2d2d2d] bg-[#424242]">
                <Caret className="w-1" />
              </div>
            </div>
          </div>
          <div className="flex h-3 shrink-0 border-t border-[#2d2d2d]">
            <div className="flex w-[80px] shrink-0 items-center gap-1 pl-1.5">
              <Icon name="thumb" size="sm" />
              <Icon name="broom" size="sm" />
              <Icon name="arrowDim" size="sm" />
            </div>
            <div className="flex w-[139px] shrink-0">
              <ScrollArrow left />
              <div className="flex-1 bg-linear-to-b from-[#5c5c5c] to-[#414141]" />
              <ScrollArrow />
            </div>
          </div>
        </div>
        <div className="w-2 shrink-0 border-x border-[#2d2d2d] bg-[#626066]" />
        <div className="relative flex w-[195px] shrink-0 flex-col">
          <div className="min-h-0 flex-1 overflow-hidden">
            <Ruler />
          </div>
          <button type="button" aria-label="适应宽度" className="absolute top-0 right-0 flex h-[18px] w-[14px] items-center justify-center bg-[#474747]">
            <Icon name="fit" size="sm" />
          </button>
          <div className="flex h-3 shrink-0 items-center">
            <span className="ml-1.5">
              <Icon name="zoom" size="sm" />
            </span>
            <input
              type="range"
              aria-label="缩放"
              defaultValue="20"
              className="mx-1 h-2 w-10 appearance-none bg-linear-to-b from-transparent via-[#202020] to-transparent [&::-webkit-slider-thumb]:h-2 [&::-webkit-slider-thumb]:w-1 [&::-webkit-slider-thumb]:appearance-none [&::-webkit-slider-thumb]:bg-[#777]"
            />
            <div className="flex h-full flex-1 bg-[#151515]">
              <ScrollArrow left />
              <div className="w-[51px] bg-linear-to-b from-[#5c5c5c] to-[#414141]" />
              <span className="ml-auto">
                <ScrollArrow />
              </span>
            </div>
          </div>
        </div>
      </div>
    </section>
  )
}

export default function App() {
  return (
    <div className="flex h-screen flex-col border-r-2 border-b-2 border-[#0d7f9b] bg-[#bcd2ea] pr-[5px] pb-px pl-[3px] font-['Noto_Sans','Noto_Sans_CJK_SC',sans-serif]">
      <TitleBar />
      <main className="flex min-h-0 flex-1 flex-col border-l border-[#6a7480] bg-[#4a4a4a]">
        <nav className="flex h-[18px] shrink-0 items-center gap-3 bg-[#555] pl-[5px] text-[10px] text-[#d6d6d6]">
          {MENUS.map((item) => (
            <button key={item} type="button" className="leading-4">
              {item}
            </button>
          ))}
        </nav>
        <MainToolbar />
        <div className="flex min-h-0 flex-1">
          <ToolStrip />
          <div className="flex min-w-0 flex-1 flex-col">
            <div className="flex min-h-0 flex-1">
              <DrawingView />
              <Splitter vertical />
              <div className="flex w-[154px] shrink-0 flex-col">
                <ToolProperties />
                <Splitter className="justify-center" />
                <ColorPanel />
              </div>
            </div>
            <Splitter className="justify-center" />
            <Timeline />
          </div>
        </div>
      </main>
    </div>
  )
}
